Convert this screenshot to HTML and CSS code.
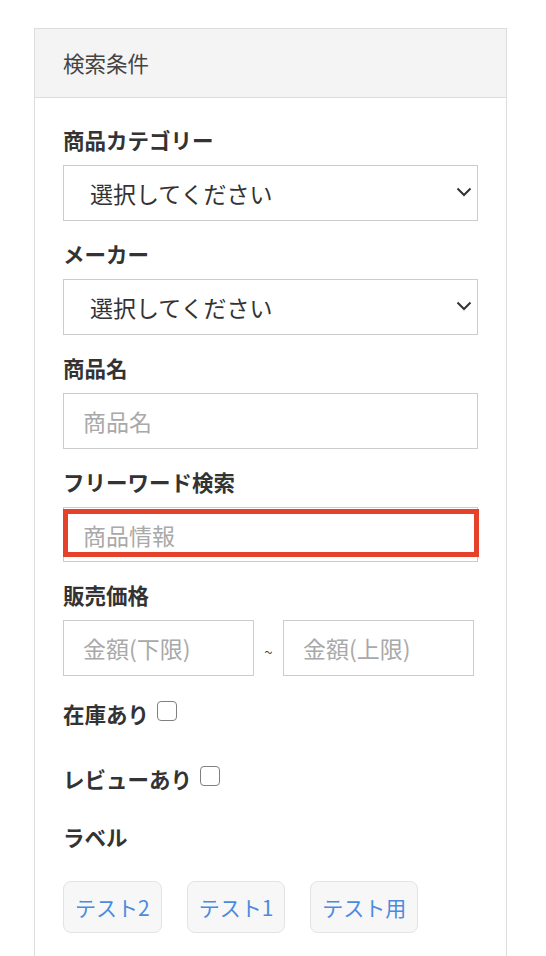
FILE: index.html
```html
<!DOCTYPE html>
<html lang="ja">
<head>
    <meta charset="UTF-8">
    <meta name="viewport" content="width=device-width, initial-scale=1.0">
    <title>検索条件</title>
    <link rel="stylesheet" href="styles.css">
</head>
<body>
    <div class="panel">
        <div class="panel-heading">検索条件</div>
        <div class="panel-body">
            <div class="form-group">
                <label class="form-label" for="category">商品カテゴリー</label>
                <div class="select-wrap">
                    <select id="category" class="form-control">
                        <option>選択してください</option>
                    </select>
                    <svg class="chevron" width="16" height="10" viewBox="0 0 16 10"><path d="M1.5 1.5l6.5 6.5 6.5-6.5" fill="none" stroke="#333" stroke-width="2"/></svg>
                </div>
            </div>
            <div class="form-group">
                <label class="form-label" for="maker">メーカー</label>
                <div class="select-wrap">
                    <select id="maker" class="form-control">
                        <option>選択してください</option>
                    </select>
                    <svg class="chevron" width="16" height="10" viewBox="0 0 16 10"><path d="M1.5 1.5l6.5 6.5 6.5-6.5" fill="none" stroke="#333" stroke-width="2"/></svg>
                </div>
            </div>
            <div class="form-group">
                <label class="form-label" for="name">商品名</label>
                <input type="text" id="name" class="form-control" placeholder="商品名">
            </div>
            <div class="form-group">
                <label class="form-label" for="keyword">フリーワード検索</label>
                <div class="highlight">
                    <input type="text" id="keyword" class="form-control" placeholder="商品情報">
                </div>
            </div>
            <div class="form-group">
                <label class="form-label">販売価格</label>
                <div class="price-row">
                    <input type="text" class="form-control price-input" placeholder="金額(下限)">
                    <span class="tilde">~</span>
                    <input type="text" class="form-control price-input" placeholder="金額(上限)">
                </div>
            </div>
            <div class="check-row">
                <label class="form-label" for="stock">在庫あり</label>
                <input type="checkbox" id="stock" class="check">
            </div>
            <div class="check-row">
                <label class="form-label" for="review">レビューあり</label>
                <input type="checkbox" id="review" class="check">
            </div>
            <div class="label-title form-label">ラベル</div>
            <div class="tags">
                <a href="#" class="tag">テスト2</a>
                <a href="#" class="tag">テスト1</a>
                <a href="#" class="tag">テスト用</a>
            </div>
        </div>
    </div>
</body>
</html>
```

FILE: styles.css
```css
* {
    margin: 0;
    padding: 0;
    box-sizing: border-box;
}

body {
    background: #fff;
    padding: 28px 0 0 34px;
    font-family: "Noto Sans CJK JP", "Noto Sans", sans-serif;
    color: #333;
}

.panel {
    width: 473px;
    min-height: 928px;
    border: 1px solid #ddd;
    border-bottom: none;
}

.panel-heading {
    height: 69px;
    line-height: 68px;
    padding-left: 28px;
    background: #f4f4f4;
    border-bottom: 1px solid #ddd;
    font-size: 21.5px;
    color: #444;
}

.panel-body {
    padding: 28px 28px 0;
}

.form-group {
    margin-bottom: 19px;
}

.form-label {
    display: block;
    font-size: 21.5px;
    font-weight: 700;
    line-height: 28px;
    margin-bottom: 11px;
    color: #333;
}

.form-control {
    display: block;
    width: 100%;
    height: 56px;
    border: 1px solid #ccc;
    border-radius: 0;
    background: #fff;
    font-family: "Noto Sans CJK JP", "Noto Sans", sans-serif;
    font-size: 23px;
    color: #333;
    padding: 0 19px;
    outline: none;
}

.form-control::placeholder {
    color: #a9a9a9;
}

.select-wrap {
    position: relative;
}

select.form-control {
    appearance: none;
    -webkit-appearance: none;
    padding-left: 26px;
}

.chevron {
    position: absolute;
    right: 6px;
    top: 22px;
    pointer-events: none;
}

.highlight {
    position: relative;
}

.highlight .form-control {
    height: 55px;
}

.highlight::after {
    content: '';
    position: absolute;
    left: 0;
    right: -1px;
    top: 2px;
    bottom: 5px;
    border: 5px solid #e5412b;
    pointer-events: none;
}

.price-row {
    display: flex;
    align-items: center;
}

.price-input {
    width: 191px;
}

.tilde {
    width: 29px;
    text-align: center;
    font-size: 15px;
    padding-top: 6px;
    color: #444;
}

.check-row {
    display: flex;
    align-items: center;
    height: 38px;
    margin-bottom: 27px;
}

.check-row .form-label {
    margin-bottom: 0;
    line-height: 38px;
}

.check {
    appearance: none;
    -webkit-appearance: none;
    width: 20px;
    height: 20px;
    margin: 0 0 6px 8px;
    border: 1.6px solid #808080;
    border-radius: 4px;
    background: #fff;
}

.label-title {
    line-height: 38px;
    margin-top: -7px;
    margin-bottom: 25px;
}

.tags {
    display: flex;
    gap: 25px;
}

.tag {
    display: inline-flex;
    align-items: center;
    height: 52px;
    padding: 0 11px;
    background: #f7f7f7;
    border: 1px solid #e3e3e3;
    border-radius: 8px;
    font-size: 21px;
    color: #4a8ae0;
    text-decoration: none;
}
```
